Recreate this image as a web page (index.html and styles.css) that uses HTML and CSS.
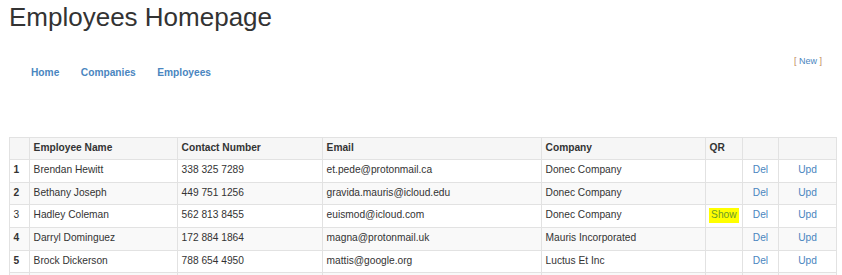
FILE: index.html
```html
<!DOCTYPE html>
<html>
<head>
<meta charset="utf-8">
<link rel="stylesheet" href="styles.css">
</head>
<body>
<div class="page">
  <h1 class="title">Employees Homepage</h1>
  <div class="navrow">
    <ul class="nav">
      <li><a href="#">Home</a></li>
      <li><a href="#">Companies</a></li>
      <li><a href="#">Employees</a></li>
    </ul>
    <div class="new"><span class="br">[</span> <a href="#">New</a> <span class="br">]</span></div>
  </div>
  <table class="grid">
    <colgroup>
      <col class="c0"><col class="c1"><col class="c2"><col class="c3"><col class="c4"><col class="c5"><col class="c6"><col class="c7">
    </colgroup>
    <tr class="head">
      <th></th><th>Employee Name</th><th>Contact Number</th><th>Email</th><th>Company</th><th>QR</th><th></th><th></th>
    </tr>
    <tr>
      <th>1</th><td>Brendan Hewitt</td><td>338 325 7289</td><td>et.pede@protonmail.ca</td><td>Donec Company</td><td></td><td class="act"><a href="#">Del</a></td><td class="act"><a href="#">Upd</a></td>
    </tr>
    <tr class="alt">
      <th>2</th><td>Bethany Joseph</td><td>449 751 1256</td><td>gravida.mauris@icloud.edu</td><td>Donec Company</td><td></td><td class="act"><a href="#">Del</a></td><td class="act"><a href="#">Upd</a></td>
    </tr>
    <tr>
      <td>3</td><td>Hadley Coleman</td><td>562 813 8455</td><td>euismod@icloud.com</td><td>Donec Company</td><td><a href="#" class="show">Show</a></td><td class="act"><a href="#">Del</a></td><td class="act"><a href="#">Upd</a></td>
    </tr>
    <tr class="alt">
      <th>4</th><td>Darryl Dominguez</td><td>172 884 1864</td><td>magna@protonmail.uk</td><td>Mauris Incorporated</td><td></td><td class="act"><a href="#">Del</a></td><td class="act"><a href="#">Upd</a></td>
    </tr>
    <tr>
      <th>5</th><td>Brock Dickerson</td><td>788 654 4950</td><td>mattis@google.org</td><td>Luctus Et Inc</td><td></td><td class="act"><a href="#">Del</a></td><td class="act"><a href="#">Upd</a></td>
    </tr>
    <tr class="alt empty">
      <th></th><td></td><td></td><td></td><td></td><td></td><td></td><td></td>
    </tr>
  </table>
</div>
</body>
</html>
```

FILE: styles.css
```css
html, body {
  margin: 0;
  padding: 0;
  background: #fff;
}
body {
  font-family: "Liberation Sans", Arial, sans-serif;
  font-size: 10.2px;
  line-height: 1.42857;
  color: #333;
  overflow: hidden;
}
.page {
  padding: 0 6px 0 9px;
}
.title {
  margin: 0;
  padding: 3px 0 0 0;
  font-size: 26px;
  font-weight: 400;
  line-height: 1.1;
  color: #333;
}
.navrow {
  display: flex;
  justify-content: space-between;
  align-items: flex-start;
  height: 85px;
  margin-top: 20px;
}
.nav {
  list-style: none;
  margin: 0;
  padding: 0 0 0 11px;
  display: flex;
  gap: 0;
  margin-top: 9px;
}
.nav li a {
  display: block;
  padding: 5px 11px;
  font-weight: 700;
  color: #4a86c0;
  text-decoration: none;
}
.nav li + li a {
  padding-left: 10.5px;
}
.new {
  font-size: 9px;
  padding-right: 14px;
  padding-top: 3px;
}
.new a {
  color: #4a86c0;
  text-decoration: none;
}
.new .br {
  color: #c08a5a;
}
.grid {
  border-collapse: collapse;
  width: 827px;
  table-layout: fixed;
}
.c0 { width: 20px; }
.c1 { width: 148px; }
.c2 { width: 145px; }
.c3 { width: 219px; }
.c4 { width: 164px; }
.c5 { width: 37px; }
.c6 { width: 36px; }
.c7 { width: 58px; }
.grid th, .grid td {
  border: 1px solid #e2e2e2;
  padding: 3px 3.6px 4px;
  height: 14.6px;
  text-align: left;
  vertical-align: top;
  white-space: nowrap;
  overflow: hidden;
}
.grid th {
  font-weight: 700;
}
.grid .head th {
  background: #f6f6f6;
}
.grid tr.alt th, .grid tr.alt td {
  background: #f9f9f9;
}
.grid td.act {
  text-align: center;
}
.grid a {
  color: #4a86c0;
  text-decoration: none;
}
.grid a.show {
  display: inline-block;
  background: #ffff00;
  color: #6a9a2a;
  padding: 0 2px;
  margin-left: -0.5px;
}
```
